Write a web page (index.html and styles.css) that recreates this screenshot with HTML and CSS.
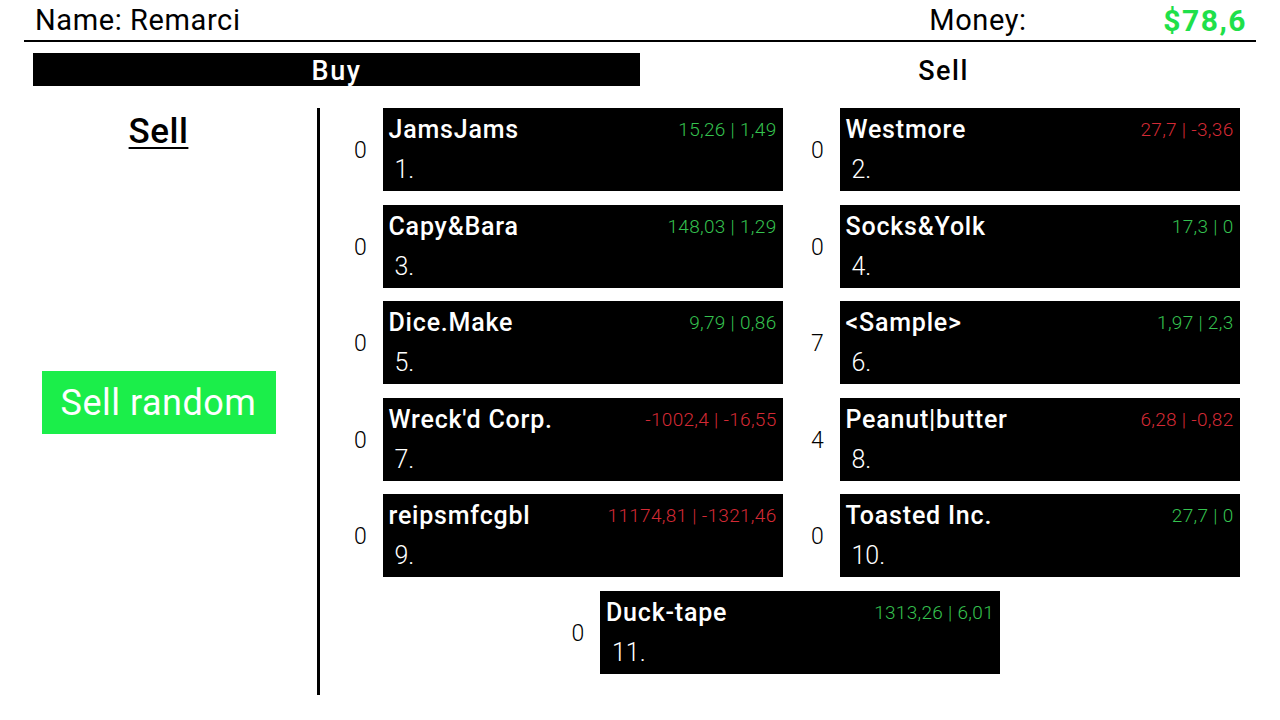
FILE: index.html
```html
<!DOCTYPE html>
<html lang="en">
<head>
  <meta charset="UTF-8" />
  <meta name="viewport" content="width=device-width, initial-scale=1.0"/>
  <title>Stock Market</title>
  <link rel="stylesheet" href="styles.css">
</head>
<body>
  <div class="header">
    <div class="name">Name: Remarci</div>
    <div class="money-label">Money:</div>
    <div class="money">$78,6</div>
  </div>

  <div class="tabs">
    <div class="tab active">Buy</div>
    <div class="tab">Sell</div>
  </div>

  <div class="main">
    <div class="side">
      <div class="side-title">Sell</div>
      <div class="sell-random">Sell random</div>
    </div>
    <div class="stocks" id="stocks"></div>
  </div>

  <script>
    const stocks = [
      { name: 'JamsJams', price: '15,26', change: '1,49', owned: 0, up: true },
      { name: 'Westmore', price: '27,7', change: '-3,36', owned: 0, up: false },
      { name: 'Capy&Bara', price: '148,03', change: '1,29', owned: 0, up: true },
      { name: 'Socks&Yolk', price: '17,3', change: '0', owned: 0, up: true },
      { name: 'Dice.Make', price: '9,79', change: '0,86', owned: 0, up: true },
      { name: '<Sample>', price: '1,97', change: '2,3', owned: 7, up: true },
      { name: "Wreck'd Corp.", price: '-1002,4', change: '-16,55', owned: 0, up: false },
      { name: 'Peanut|butter', price: '6,28', change: '-0,82', owned: 4, up: false },
      { name: 'reipsmfcgbl', price: '11174,81', change: '-1321,46', owned: 0, up: false },
      { name: 'Toasted Inc.', price: '27,7', change: '0', owned: 0, up: true },
      { name: 'Duck-tape', price: '1313,26', change: '6,01', owned: 0, up: true }
    ];

    const list = document.getElementById('stocks');

    stocks.forEach((s, i) => {
      const row = document.createElement('div');
      row.className = 'stock';

      const owned = document.createElement('div');
      owned.className = 'owned';
      owned.textContent = s.owned;

      const card = document.createElement('div');
      card.className = 'card';

      const top = document.createElement('div');
      top.className = 'card-top';

      const name = document.createElement('div');
      name.className = 'card-name';
      name.textContent = s.name;

      const stats = document.createElement('div');
      stats.className = 'card-stats ' + (s.up ? 'up' : 'down');
      stats.textContent = s.price + ' | ' + s.change;

      const num = document.createElement('div');
      num.className = 'card-num';
      num.textContent = (i + 1) + '.';

      top.appendChild(name);
      top.appendChild(stats);
      card.appendChild(top);
      card.appendChild(num);
      row.appendChild(owned);
      row.appendChild(card);
      list.appendChild(row);
    });
  </script>
</body>
</html>
```

FILE: styles.css
```css
body {
  margin: 0;
  background: #fff;
  color: #000;
  font-family: Roboto, 'Liberation Sans', Arial, sans-serif;
  overflow: hidden;
}

.header {
  display: flex;
  align-items: center;
  height: 40px;
  margin: 0 24px;
  padding: 0 9px 0 11px;
  border-bottom: 2px solid #000;
  font-size: 29px;
  letter-spacing: 0.6px;
}

.name {
  flex: 1;
}

.money-label {
  width: 234px;
}

.money {
  color: #1fe04a;
  font-weight: 700;
  font-size: 30px;
  letter-spacing: 1.5px;
}

.tabs {
  display: flex;
  margin: 11px 33px 0 33px;
  height: 33px;
}

.tab {
  flex: 1;
  display: flex;
  justify-content: center;
  align-items: center;
  font-size: 27px;
  font-weight: 500;
  letter-spacing: 1.5px;
  padding-top: 2px;
}

.tab.active {
  background: #000;
  color: #fff;
}

.main {
  display: flex;
  margin-top: 22px;
}

.side {
  width: 317px;
  height: 587px;
  display: grid;
  grid-template-rows: 1fr auto 1fr;
  justify-items: center;
}

.side-title {
  align-self: start;
  font-size: 35px;
  font-weight: 500;
  letter-spacing: 0.5px;
  text-decoration: underline;
  text-decoration-thickness: 2px;
  text-underline-offset: 4px;
  margin-top: 3px;
}

.sell-random {
  width: 234px;
  height: 63px;
  background: #1bee4a;
  color: #fff;
  font-size: 36px;
  letter-spacing: 0.5px;
  display: flex;
  justify-content: center;
  align-items: center;
  margin-top: 2px;
}

.stocks {
  border-left: 3px solid #000;
  padding-left: 4px;
  width: 930px;
  display: flex;
  flex-wrap: wrap;
  justify-content: center;
  column-gap: 13px;
  row-gap: 13.6px;
  align-content: flex-start;
}

.stock {
  display: flex;
  align-items: center;
}

.stock:last-child {
  margin-right: 22px;
}

.owned {
  width: 44px;
  text-align: center;
  font-size: 23px;
  font-weight: 300;
  padding-top: 2px;
}

.card {
  width: 388px;
  height: 83px;
  background: #000;
  color: #fff;
  padding: 0 6px;
  display: flex;
  flex-direction: column;
}

.card-top {
  display: flex;
  justify-content: space-between;
  align-items: baseline;
  margin-top: 7px;
}

.card-name {
  font-size: 25px;
  font-weight: 500;
  letter-spacing: 0.8px;
}

.card-stats {
  font-size: 19px;
  font-weight: 300;
  letter-spacing: 0.3px;
  position: relative;
  top: -2px;
}

.card-stats.up {
  color: #35c24f;
}

.card-stats.down {
  color: #d42a35;
}

.card-num {
  font-size: 25px;
  font-weight: 300;
  margin: 11px 0 0 6px;
}
```
